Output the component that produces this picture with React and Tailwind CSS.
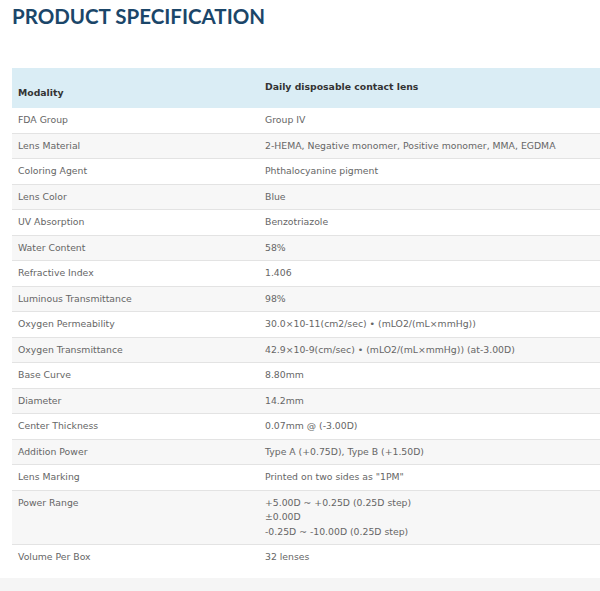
import React from "react";

const specs = [
  ["FDA Group", ["Group IV"]],
  ["Lens Material", ["2-HEMA, Negative monomer, Positive monomer, MMA, EGDMA"]],
  ["Coloring Agent", ["Phthalocyanine pigment"]],
  ["Lens Color", ["Blue"]],
  ["UV Absorption", ["Benzotriazole"]],
  ["Water Content", ["58%"]],
  ["Refractive Index", ["1.406"]],
  ["Luminous Transmittance", ["98%"]],
  ["Oxygen Permeability", ["30.0×10-11(cm2/sec) • (mLO2/(mL×mmHg))"]],
  ["Oxygen Transmittance", ["42.9×10-9(cm/sec) • (mLO2/(mL×mmHg)) (at-3.00D)"]],
  ["Base Curve", ["8.80mm"]],
  ["Diameter", ["14.2mm"]],
  ["Center Thickness", ["0.07mm @ (-3.00D)"]],
  ["Addition Power", ["Type A (+0.75D), Type B (+1.50D)"]],
  ["Lens Marking", ['Printed on two sides as "1PM"']],
  ["Power Range", ["+5.00D ~ +0.25D (0.25D step)", "±0.00D", "-0.25D ~ -10.00D (0.25D step)"]],
  ["Volume Per Box", ["32 lenses"]],
];

export default function App() {
  return (
    <div className="w-[600px] min-h-[591px] bg-white flex flex-col">
      <h1 className="pl-3 pt-[3px] h-[68px] text-[20.5px] leading-[26px] font-bold text-[#1b4669] font-['Lato','Open_Sans',sans-serif]">
        PRODUCT SPECIFICATION
      </h1>
      <div className="pl-3 pb-2">
        <table className="w-full border-collapse font-['DejaVu_Sans','Verdana',sans-serif] text-[9.3px]">
          <thead>
            <tr className="bg-[#daedf5] h-[40px]">
              <th className="w-[247px] text-left align-bottom pl-[6px] pb-[8px] font-bold text-[#333] leading-[14px]">Modality</th>
              <th className="text-left align-top pl-[6px] pt-[12px] font-bold text-[#333] leading-[14px]">Daily disposable contact lens</th>
            </tr>
          </thead>
          <tbody>
            {specs.map(([k, v], i) => (
              <tr
                key={k}
                className={`${i < specs.length - 1 ? "border-b border-[#e3e3e3]" : ""} ${i % 2 === 1 ? "bg-[#f7f7f7]" : "bg-white"}`}
              >
                <td className="align-top pl-[6px] py-[5px] leading-[14.5px] text-[#666]">{k}</td>
                <td className="align-top pl-[6px] py-[5px] leading-[14.5px] text-[#666]">
                  {v.map((line) => (
                    <div key={line}>{line}</div>
                  ))}
                </td>
              </tr>
            ))}
          </tbody>
        </table>
      </div>
      <div className="flex-1 bg-[#f5f5f5]" />
    </div>
  );
}
